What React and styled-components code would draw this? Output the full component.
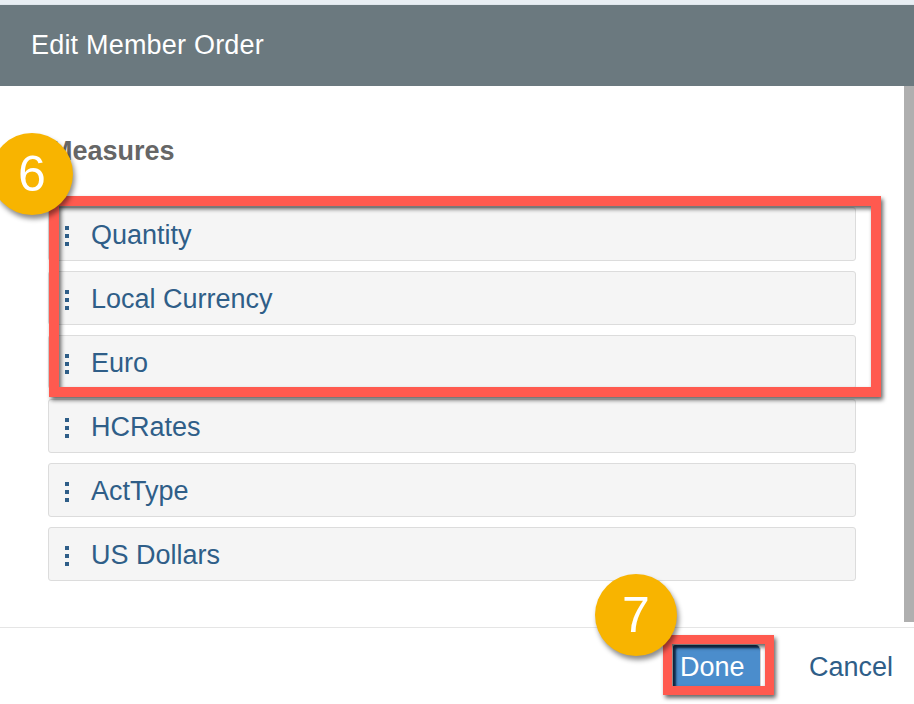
import React from "react";
import styled, { createGlobalStyle } from "styled-components";

const Global = createGlobalStyle`
  html, body { margin: 0; padding: 0; background: #fff; }
  body { font-family: "Liberation Sans", Arial, sans-serif; width: 914px; height: 704px; overflow: hidden; }
`;

const Page = styled.div`
  width: 914px;
  height: 704px;
  display: flex;
  flex-direction: column;
  position: relative;
  overflow: hidden;
`;

const TopStrip = styled.div`
  height: 5px;
  background: #e8eef3;
  border-bottom: 1px solid #dfe6ec;
  box-sizing: border-box;
`;

const Header = styled.header`
  height: 81px;
  background: #6b797f;
  display: flex;
  align-items: center;
  padding-left: 31px;
`;

const Title = styled.h1`
  margin: 0;
  font-weight: 400;
  font-size: 27px;
  color: #ffffff;
  letter-spacing: 0.2px;
`;

const Body = styled.div`
  height: 541px;
  display: flex;
  align-items: flex-start;
`;

const Content = styled.div`
  flex: 1;
  padding: 49px 48px 0 48px;
`;

const Scrollbar = styled.div`
  width: 10px;
  height: 536px;
  background: #afafaf;
`;

const Heading = styled.h2`
  margin: 0 0 40px 2px;
  font-size: 27px;
  line-height: 32px;
  font-weight: 700;
  color: #666666;
`;

const List = styled.div`
  position: relative;
  display: flex;
  flex-direction: column;
  gap: 10px;
`;

const Row = styled.div`
  height: 54px;
  box-sizing: border-box;
  background: #f5f5f5;
  border: 1px solid #dcdcdc;
  border-radius: 3px;
  display: flex;
  align-items: center;
  padding-left: 16px;
  padding-top: 3px;
  gap: 22px;
`;

const Handle = styled.span`
  display: flex;
  flex-direction: column;
  gap: 4px;
`;

const Dot = styled.span`
  width: 4px;
  height: 4px;
  background: #2f5e88;
`;

const Label = styled.span`
  font-size: 27px;
  color: #2f5e88;
`;

const Highlight = styled.div`
  position: absolute;
  left: ${(p) => p.$left}px;
  top: ${(p) => p.$top}px;
  width: ${(p) => p.$width}px;
  height: ${(p) => p.$height}px;
  box-sizing: border-box;
  border: ${(p) => p.$border}px solid #ff5a4f;
  filter: drop-shadow(2px 3px 2px rgba(0, 0, 0, 0.6));
  pointer-events: none;
`;

const Badge = styled.div`
  position: absolute;
  left: ${(p) => p.$x - 41}px;
  top: ${(p) => p.$y - 41}px;
  width: 82px;
  height: 82px;
  border-radius: 50%;
  background: #f8b400;
  color: #ffffff;
  font-size: 50px;
  display: flex;
  align-items: center;
  justify-content: center;
  box-shadow: 2px 4px 5px rgba(0, 0, 0, 0.45);
  z-index: 3;
`;

const Footer = styled.footer`
  flex: 1;
  border-top: 1px solid #e5e5e5;
  display: flex;
  align-items: center;
  justify-content: flex-end;
  padding-right: 21px;
  padding-bottom: 0px;
  gap: 44px;
`;

const ButtonWrap = styled.div`
  position: relative;
  display: flex;
`;

const DoneButton = styled.button`
  width: 88px;
  height: 42px;
  border: none;
  border-radius: 2px 5px 0 0;
  background: #4b8dcc;
  box-shadow: inset 3px 3px 2px rgba(10, 30, 60, 0.75);
  color: #ffffff;
  font-family: inherit;
  font-size: 27px;
  text-align: left;
  padding: 3px 0 0 7px;
  margin-right: 4px;
  border-right: 1px solid #d0d0d0;
`;

const TextButton = styled.button`
  background: none;
  border: none;
  padding: 3px 0 0 0;
  font-family: inherit;
  font-size: 27px;
  color: #2f5e88;
`;

const items = ["Quantity", "Local Currency", "Euro", "HCRates", "ActType", "US Dollars"];

export default function App() {
  return (
    <Page>
      <Global />
      <TopStrip />
      <Header>
        <Title>Edit Member Order</Title>
      </Header>
      <Body>
        <Content>
          <Heading>Measures</Heading>
          <List>
            {items.map((t) => (
              <Row key={t}>
                <Handle>
                  <Dot />
                  <Dot />
                  <Dot />
                </Handle>
                <Label>{t}</Label>
              </Row>
            ))}
            <Highlight $left={1} $top={-11} $width={832} $height={201} $border={10} />
          </List>
        </Content>
        <Scrollbar />
      </Body>
      <Footer>
        <ButtonWrap>
          <DoneButton>Done</DoneButton>
          <Highlight $left={-10} $top={-10} $width={111} $height={60} $border={9} />
        </ButtonWrap>
        <TextButton>Cancel</TextButton>
      </Footer>
      <Badge $x={32} $y={174}>6</Badge>
      <Badge $x={636} $y={615}>7</Badge>
    </Page>
  );
}
